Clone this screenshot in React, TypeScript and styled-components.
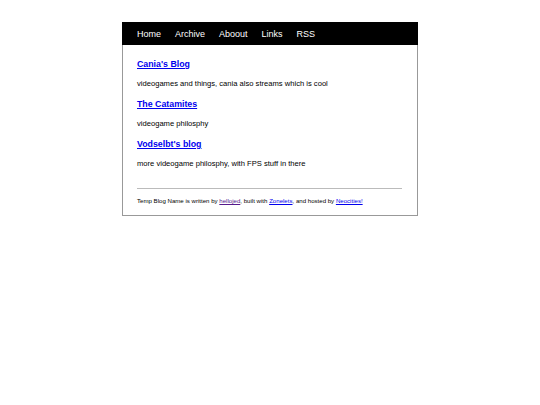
import styled, { createGlobalStyle } from "styled-components";

const GlobalStyle = createGlobalStyle`
  body {
    margin: 0;
    background: #ffffff;
    font-family: "Liberation Sans", Arial, sans-serif;
    color: #000000;
  }
`;

const Page = styled.div`
  padding-top: 22px;
  display: flex;
  justify-content: center;
`;
const Container = styled.div`
  width: 294px;
  border: 1px solid #999999;
  border-top: none;
`;
const Header = styled.nav`
  background: #000000;
  height: 23px;
  margin: 0 -1px;
  display: flex;
  align-items: center;
  padding-left: 15px;
  gap: 14px;
`;
const NavLink = styled.a`
  color: #ffffff;
  text-decoration: none;
  font-size: 9px;
`;
const Main = styled.main`
  padding: 9px 15px 9px 14px;
`;
const BlogTitle = styled.h3`
  margin: 0;
  font-size: 8.8px;
  line-height: 20px;
  a {
    color: #0000ee;
  }
`;
const Blurb = styled.p`
  margin: 0;
  font-size: 7.6px;
  line-height: 20px;
`;
const Rule = styled.hr`
  border: none;
  border-top: 1px solid #bbbbbb;
  margin: 14px 0 7px;
`;
const Footer = styled.footer`
  font-size: 6.1px;
  line-height: 10px;
  a {
    color: #0000ee;
  }
  a.visited {
    color: #551a8b;
  }
`;

interface IBlog {
  name: string;
  blurb: string;
}

const blogs: IBlog[] = [
  { name: "Cania's Blog", blurb: "videogames and things, cania also streams which is cool" },
  { name: "The Catamites", blurb: "videogame philosphy" },
  { name: "Vodselbt's blog", blurb: "more videogame philosphy, with FPS stuff in there" },
];

const navItems = ["Home", "Archive", "Aboout", "Links", "RSS"];

function App() {
  return (
    <Page>
      <GlobalStyle />
      <Container>
        <Header>
          {navItems.map((item) => (
            <NavLink key={item} href="#">
              {item}
            </NavLink>
          ))}
        </Header>
        <Main>
          {blogs.map((blog) => (
            <div key={blog.name}>
              <BlogTitle>
                <a href="#">{blog.name}</a>
              </BlogTitle>
              <Blurb>{blog.blurb}</Blurb>
            </div>
          ))}
          <Rule />
          <Footer>
            Temp Blog Name is written by <a className="visited" href="#">hellojed</a>, built with{" "}
            <a href="#">Zonelets</a>, and hosted by <a href="#">Neocities!</a>
          </Footer>
        </Main>
      </Container>
    </Page>
  );
}

export default App;
